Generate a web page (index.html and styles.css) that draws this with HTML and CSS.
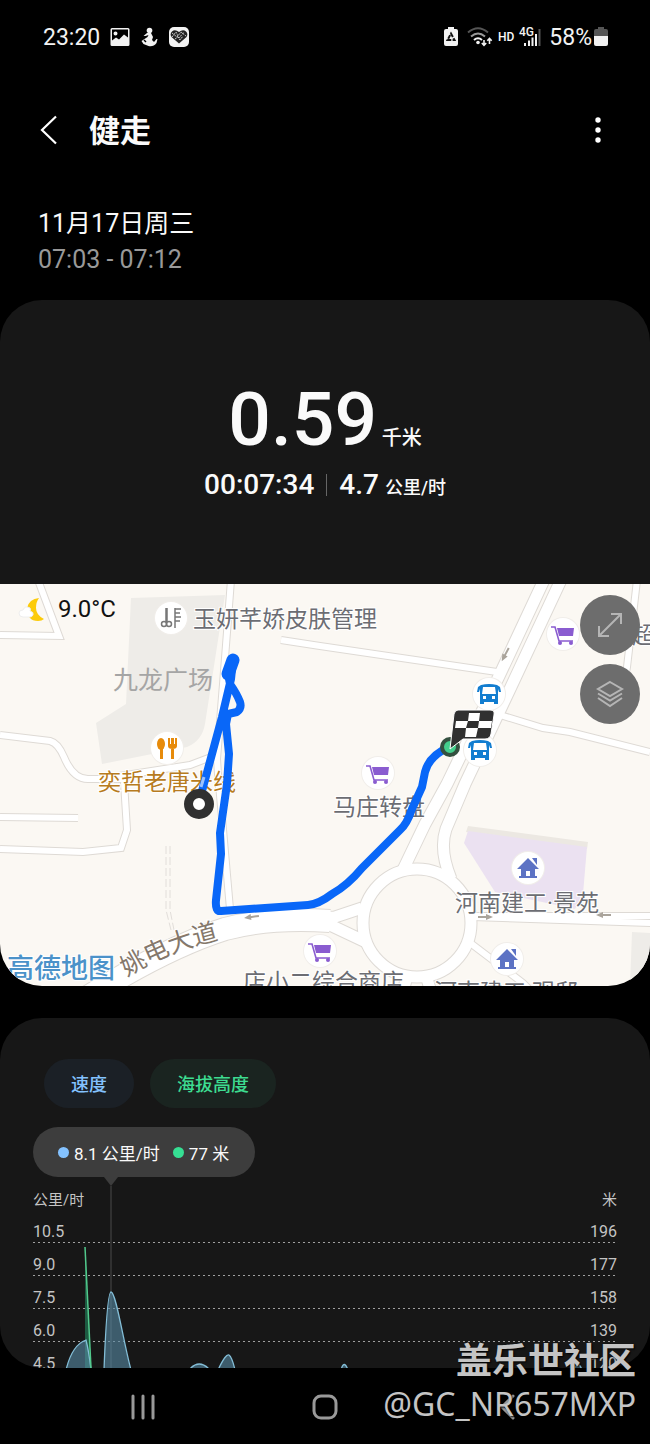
FILE: index.html
```html
<!DOCTYPE html>
<html lang="zh-CN">
<head>
<meta charset="utf-8">
<meta name="viewport" content="width=device-width, initial-scale=1">
<title>健走</title>
<link rel="stylesheet" href="styles.css">
</head>
<body>
<div class="screen">
  <div class="status">
    <div class="status-side">
      <span class="clock">23:20</span>
      <svg width="20" height="20" viewBox="0 0 20 20"><path fill="#f2f2f2" fill-rule="evenodd" d="M2 1h16q1.500 0 1.500 1.500v15q0 1.500-1.500 1.500h-16q-1.500 0-1.500-1.500v-15q0-1.500 1.500-1.500zM2 2.500v11l4-3 3 2 5-5 4 3v-8zM5.500 4.500a2 2 0 1 1 0 4 2 2 0 0 1 0-4z"/></svg>
      <svg width="18" height="20" viewBox="0 0 18 20"><g fill="#f2f2f2"><circle cx="9.500" cy="3.500" r="2.800"/><path d="M7 6l4 0 2 4-1 3 2 2 2.500-3 1 0-1 4q-3 4-8 3l-5-2-2-3 3-2 3-2 1-2-3 1-2 0z"/></g><path d="M4 13l2 2" stroke="#000" stroke-width="1.500"/></svg>
      <svg width="22" height="22" viewBox="0 0 22 22"><rect x="1" y="1" width="20" height="20" rx="5" fill="#f2f2f2"/><path fill="#222" d="M11 17.500L3.500 11Q1.500 8 4 5.500Q7 3 11 6Q15 3 18 5.500Q20.500 8 18.500 11z"/><path fill="none" stroke="#ddd" stroke-width=".9" stroke-dasharray="2 1" d="M4 7l5 4 4-5 5 4M4 11l4-5 3 6 5-6M7 13l3-2 2 3 3-4"/></svg>
    </div>
    <div class="status-side status-right">
      <svg width="14" height="20" viewBox="0 0 14 20"><path fill="#f2f2f2" d="M4 0h6v2h2q2 0 2 2v13q0 2-2 2H2q-2 0-2-2V4q0-2 2-2h2z"/><path fill="none" stroke="#111" stroke-width="2" stroke-dasharray="4 1.300" d="M7 6.500l3.500 6.500h-7z"/></svg>
      <svg class="wifi" width="26" height="20" viewBox="0 0 26 20" fill="none" stroke-width="2"><path stroke="#555" d="M1 5.500Q11-3 21 5.500"/><path stroke="#999" d="M4 9.500q7-6 14 0"/><path stroke="#f2f2f2" d="M7 13q4-3.500 8 0"/><circle cx="11" cy="15.500" r="1.800" fill="#f2f2f2"/><path stroke="#f2f2f2" stroke-width="1.600" d="M17 13v5M14.800 16l2.200 2.300 2.200-2.300M22.500 17v-5.500M20.300 13.700l2.200-2.300 2.200 2.300"/></svg>
      <span class="hd">HD</span>
      <svg class="signal" width="22" height="20" viewBox="0 0 22 20"><text x="0" y="9" class="net">4G</text><g fill="#f2f2f2"><path d="M5 16h2v3H5zM9 13.500h2V19H9zM12.500 10.500h2V19h-2zM16 7h2v12h-2z"/><path fill="#555" d="M19.500 2h2v17h-2z"/></g></svg>
      <span class="clock percent">58%</span>
      <svg width="14" height="20" viewBox="0 0 14 20"><path fill="#555" d="M4 0h6v2h2q2 0 2 2v5H0V4q0-2 2-2h2z"/><path fill="#f2f2f2" d="M0 9h14v8q0 2-2 2H2q-2 0-2-2z"/></svg>
    </div>
  </div>

  <header class="bar">
    <button class="icon-btn back" aria-label="返回"><svg width="18" height="30" viewBox="0 0 18 30"><path d="M16 1.500L2 15l14 13.500" fill="none" stroke="#fff" stroke-width="2.200"/></svg></button>
    <h1>健走</h1>
    <button class="icon-btn" aria-label="更多"><svg width="8" height="26" viewBox="0 0 8 26" fill="#fff"><circle cx="4" cy="3" r="2.700"/><circle cx="4" cy="13" r="2.700"/><circle cx="4" cy="23" r="2.700"/></svg></button>
  </header>

  <div class="when">
    <p>11月17日周三</p>
    <p class="range">07:03 - 07:12</p>
  </div>

  <section class="workout">
    <div class="totals">
      <p class="distance">0.59 <span>千米</span></p>
      <p class="detail"><span>00:07:34</span><i></i><span>4.7 <small>公里/时</small></span></p>
    </div>
    <div class="map">
      <svg class="map-art" viewBox="0 0 650 402" role="img" aria-label="路线地图">
        <defs>
          <g id="minor">
            <path d="M38-4L59 52L0 51"/>
            <path d="M0 151L50 157Q58 159 64 173Q73 195 88 195L125 195M100 195L190 181L219 170"/>
            <path d="M124 198L127 246L121 264L83 268L0 265"/>
            <path d="M0 233L78 234"/>
            <path d="M231-4L223 100L217 175L219 205"/>
            <path d="M281 56L320 62L497 88"/>
            <path d="M500 131L543 144L570 148L650 168"/>
            <path d="M637-4L627 83L621 115"/>
            <path d="M465 355L523 399L530 406"/>
            <path d="M472 332L652 332M472 333L652 339"/>
            <path d="M219 200L230 325"/>
          </g>
          <g id="major">
            <path d="M544-4L500 90L447 200L425 240L402 288"/>
            <path d="M561-4L510 105L465 200L446 245Q439 266 451 295"/>
            <circle cx="417" cy="339" r="54"/>
            <path d="M408 388L403 408M425 388L431 408"/>
            <path d="M300 334L335 333L362 324M300 339L330 341L366 358"/>
          </g>
          <path id="avenue" d="M86 414Q165 364 225 345Q270 333 330 337"/>
          <g id="disc"><circle r="17" fill="#f1eeea"/><circle r="16" fill="#fff"/></g>
          <g id="cart"><use href="#disc"/><g fill="none" stroke="#8a5cd0" stroke-width="1.600"><path d="M-12-7h4l4 14H10"/></g><path d="M-6-6H11L10 2H-4z" fill="#8a5cd0"/><circle cx="-3" cy="9" r="2" fill="#8a5cd0"/><circle cx="8" cy="9" r="2" fill="#8a5cd0"/></g>
          <g id="bus"><use href="#disc"/><path fill="#127dd0" fill-rule="evenodd" d="M-8-9Q0-11 8-9L11-7L12-2h-2L9-5V10H5V8H-5v2h-4V-5l-1 3h-2l1-5zM-6-7L-7 0H7L6-7zM-6 2h3v3h-3zM3 2h3v3H3z"/></g>
          <g id="home"><use href="#disc"/><path fill="#5d73c4" fill-rule="evenodd" d="M-11 1L0-10L11 1H7V8H9V10H-9V8h2V1zM-2 3V8H2V3zM4-10H9V-3z"/></g>
          <g id="arrow" fill="none" stroke="#aaa49b" stroke-width="2"><path d="M-1 0H8"/><path d="M-7 0l7-3v6z" fill="#aaa49b" stroke="none"/></g>
          <path id="street" d="M127 393Q168 366 226 354"/>
        </defs>
        <rect width="650" height="402" fill="#fbf8f3"/>
        <path fill="#eeece8" d="M131 14L225 11L205 140Q202 157 187 163L102 180L96 139L126 120zM632 348L650 349V402H630z"/>
        <path fill="#ece8e2" d="M468 242L588 258L587 265L466 248z"/>
        <path fill="#ebe1f1" d="M468 247L587 263L583 310L575 325L495 308L464 259z"/>
        <g class="roads">
          <use href="#minor" class="edge minor"/><use href="#major" class="edge major"/><use href="#avenue" class="edge avenue"/>
          <use href="#minor" class="fill minor"/><use href="#major" class="fill major"/><use href="#avenue" class="fill avenue"/>
          <path d="M166 262V326L171 346M170 262V326L174 346" class="dash"/>
        </g>
        <use href="#arrow" transform="translate(251 333) rotate(-8)"/>
        <use href="#arrow" transform="translate(505 71) rotate(-62)"/>
        <use href="#arrow" transform="translate(486 333) rotate(180)"/>
        <use href="#arrow" transform="translate(603 331)"/>

        <g class="place">
          <text x="193" y="43">玉妍芊娇皮肤管理</text>
          <text x="333" y="231">马庄转盘</text>
          <text x="455" y="327">河南建工·景苑</text>
          <text x="243" y="406">店小二综合商店</text>
          <text x="434" y="416">河南建工·观邸</text>
          <text x="632" y="59">超</text>
          <text x="98" y="206" class="food">奕哲老唐米线</text>
          <text x="113" y="105" class="plaza">九龙广场</text>
          <text class="avenue-name"><textPath href="#street">姚电大道</textPath></text>
          <text x="7" y="394" class="brand">高德地图</text>
        </g>
        <g transform="translate(171 34)"><use href="#disc"/><g fill="none" stroke="#777" stroke-width="1.500"><path d="M-5-10V4M-4-10V4M4-10V10M4-9h6M4-5h5M4-1h6M4 3h5"/><circle cx="-7" cy="6" r="2.500"/><circle cx="-2" cy="6" r="2.500"/></g></g>
        <g transform="translate(167 164)"><use href="#disc"/><g fill="#e78b0b"><ellipse cx="-6" cy="-4" rx="4" ry="6"/><path d="M-7 0h3v11h-3zM4 0h3v11H4zM1-10h2v6h1v-6h3v6h1v-6h2v8q0 3-4.500 3T1-2z"/></g></g>
        <use href="#cart" x="378" y="189"/><use href="#cart" x="563" y="50"/><use href="#cart" x="320" y="367"/>
        <use href="#bus" x="489" y="110"/><use href="#bus" x="480" y="166"/>
        <use href="#home" x="528" y="284"/><use href="#home" x="507" y="375"/>
        <g fill="none" stroke="#0967f8" stroke-width="8" stroke-linecap="round" stroke-linejoin="round">
          <path d="M202 207L222 133L231 95L233 76L228 90L230 100Q237 110 240 118Q242 124 237 128L228 130L226 140L229 170L227 200L220 249L221 270L216 316Q215 328 221 327L308 321Q319 320 332 310Q348 301 362 284L400 246Q407 240 412 225L422 203L425 188Q429 172 449 163"/>
          <path d="M233 76L228 90" stroke-width="13"/>
        </g>
        <path d="M201 203l3-10" stroke="#fff" stroke-width="3" opacity=".6"/>
        <circle cx="199" cy="220" r="10.500" fill="#fff" stroke="#303030" stroke-width="9"/>
        <circle cx="450" cy="163" r="8" fill="#43cf8c" stroke="#34503f" stroke-width="4"/>
        <path d="M458 126H490Q495 126 494 131L491 150Q490 155 485 155H463L450 165L454 130Q455 126 458 126z" fill="#303030" stroke="#fff" stroke-width="1"/>
        <path fill="#fff" d="M469 129h11l-1 8h-11zM456 137h12l-2 7h-11zM479 137h13l-1 7h-13zM466 144h12l-2 9h-11z"/>
      </svg>
      <div class="weather">
        <svg width="30" height="25" viewBox="0 0 30 25"><path fill="#fccb09" d="M21 1Q11 2 9 11Q9 24 20 24Q24 24 26 22Q18 18 18 11Q18 5 21 1z"/><path fill="#fff" stroke="#eee" d="M5 20Q1 20 1 16Q1 13 5 13Q7 8 12 11Q13 13 12 14Q16 15 15 18Q14 20 12 20z"/></svg>
        <span>9.0°C</span>
      </div>
      <div class="map-tools">
        <button aria-label="展开"><svg width="26" height="26" viewBox="0 0 26 26"><path d="M2 24L24 2M14 2H24V12M2 14V24H12"/></svg></button>
        <button aria-label="图层"><svg width="28" height="28" viewBox="0 0 28 28"><path d="M14 2L26 9L14 16L2 9zM2 13.500L14 20.500L26 13.500M2 18L14 26L26 18"/></svg></button>
      </div>
    </div>
  </section>

  <section class="graph">
    <div class="chips"><button class="chip speed">速度</button><button class="chip height">海拔高度</button></div>
    <div class="readout"><b class="dot blue"></b>8.1 公里/时<b class="dot green"></b>77 米</div>
    <div class="chart">
      <div class="units"><span>公里/时</span><span>米</span></div>
      <div class="tick"><span>10.5</span><span>196</span></div>
      <div class="tick"><span>9.0</span><span>177</span></div>
      <div class="tick"><span>7.5</span><span>158</span></div>
      <div class="tick"><span>6.0</span><span>139</span></div>
      <div class="tick last"><span>4.5</span><span>120</span></div>
      <svg class="curves" viewBox="0 0 584 191" preserveAspectRatio="none">
        <path d="M78 9V191" stroke="#303030" stroke-width="2"/>
        <path d="M52 70L58 191H52z" fill="#1d5b42"/>
        <g fill="#578ba5" fill-opacity=".6" stroke="#83bdd6" stroke-width="1.300">
          <path d="M33 193Q39 168 53 163Q56 175 58 193z"/>
          <path d="M71 193Q74 115 78 115C83 115 90 163 98 193z"/>
          <path d="M156 193Q166 181 177 193zM185 193Q193 176 196 178T202 193zM308 193Q311 182 315 193zM541 193Q545 182 549 193z"/>
        </g>
        <path d="M52 70L58 191" fill="none" stroke="#52c98c" stroke-width="1.500"/>
      </svg>
    </div>
  </section>

  <nav class="nav">
    <button aria-label="最近"><svg width="24" height="26" viewBox="0 0 24 26"><path d="M2 2v22M12 2v22M22 2v22" stroke="#999" stroke-width="3" stroke-linecap="round"/></svg></button>
    <button aria-label="主页"><svg width="26" height="26" viewBox="0 0 26 26"><rect x="2" y="2" width="22" height="22" rx="7" fill="none" stroke="#999" stroke-width="3"/></svg></button>
    <button aria-label="后退"><svg width="24" height="26" viewBox="0 0 24 26"><path d="M18 2L7 13l11 11" fill="none" stroke="#999" stroke-width="3" stroke-linecap="round"/></svg></button>
  </nav>
  <div class="credit"><strong>盖乐世社区</strong><span>@GC_NR657MXP</span></div>
</div>
</body>
</html>
```
FILE: styles.css
```css
* { box-sizing: border-box; }
body { margin: 0; background: #000; color: #fafafa; font-family: Roboto, "Noto Sans CJK SC", sans-serif; }
p, h1 { margin: 0; }
button { border: 0; padding: 0; background: none; color: inherit; font: inherit; }
svg { display: block; flex: none; }
.screen { position: relative; }

.status { display: flex; justify-content: space-between; align-items: center; height: 74px; padding: 0 42px 0 43px; }
.status-side { display: flex; align-items: center; gap: 10px; }
.status-right { gap: 5px; }
.wifi { margin-left: 4px; }
.clock { padding-top: 2px; font-size: 23px; line-height: 28px; color: #f2f2f2; }
.percent { margin: 0 -3px 0 3px; }
.hd { font-size: 12px; font-weight: 500; }
.signal { overflow: visible; }
.net { font: 500 12px Roboto, sans-serif; fill: #f2f2f2; }

.bar { display: flex; align-items: center; height: 112px; padding: 0 48px 0 40px; }
.bar h1 { flex: 1; margin-left: 31px; padding-top: 3px; font-size: 31px; line-height: 40px; font-weight: 700; }

.when { padding: 20px 38px 0; font-size: 25px; line-height: 36px; height: 114px; }
.range { color: #999; }

.workout { overflow: hidden; border-radius: 42px; background: #171717; }
.totals { height: 284px; padding-top: 74px; text-align: center; font-weight: 500; }
.distance { font-size: 75px; line-height: 90px; }
.distance span { font-size: 20px; line-height: 20px; margin-left: -14px; }
.detail { display: flex; justify-content: center; align-items: baseline; gap: 12px; margin-top: 2px; font-size: 28px; line-height: 38px; }
.detail i { align-self: center; width: 1px; height: 22px; background: #666; }
.detail small { font-size: 18px; line-height: 18px; margin-left: -1px; }

.map { position: relative; }
.map-art { width: 100%; height: auto; }
.roads { fill: none; }
.edge { stroke: #dedad5; }
.fill { stroke: #fff; }
.edge.minor { stroke-width: 8px; }
.fill.minor { stroke-width: 6px; }
.edge.major { stroke-width: 13px; }
.fill.major { stroke-width: 11px; }
.edge.avenue { stroke-width: 24px; }
.fill.avenue { stroke-width: 22px; }
.dash { stroke: #e2deda; stroke-width: 1px; stroke-dasharray: 8 3; }
.place { font: 400 23px Roboto, "Noto Sans CJK SC", sans-serif; fill: #6c6d73; stroke: #fff; stroke-width: 2px; paint-order: stroke; }
.food { fill: #b77b20; }
.plaza { font-size: 25px; fill: #a5a5a5; stroke: none; }
.avenue-name { font-size: 25px; fill: #85786b; }
.brand { font-size: 27px; font-weight: 500; fill: #4b92c9; }
.weather { position: absolute; top: 10px; left: 18px; display: flex; align-items: center; gap: 10px; font-size: 24px; line-height: 30px; color: #111; }
.map-tools { position: absolute; top: 11px; right: 10px; display: grid; gap: 9px; }
.map-tools button { display: grid; place-items: center; width: 60px; height: 60px; border-radius: 50%; background: #6d6d6d; }
.map-tools path { fill: none; stroke: #b5b5b5; stroke-width: 2px; }

.graph { height: 350px; margin-top: 32px; padding: 41px 33px 0; overflow: hidden; border-radius: 42px; background: #171717; }
.chips { display: flex; gap: 16px; padding-left: 11px; }
.chip { height: 49px; padding: 0 27px 2px; border-radius: 25px; font-size: 18px; font-weight: 500; }
.speed { color: #84c2ff; background: #1b2026; }
.height { color: #3ddc91; background: #1a2420; }
.readout { position: relative; display: flex; align-items: center; width: max-content; height: 50px; margin-top: 19px; padding: 0 26px 0 25px; border-radius: 25px; background: #3d3d3d; font-size: 17px; }
.readout::after { content: ""; position: absolute; top: 100%; left: 71px; border: 7px solid transparent; border-top: 9px solid #3d3d3d; border-bottom: 0; }
.dot { width: 11px; height: 11px; margin-right: 5px; border-radius: 50%; }
.blue { background: #84c2ff; }
.green { margin-left: 13px; background: #36df93; }
.chart { position: relative; color: #c4c4c4; font-size: 16px; }
.units { display: flex; justify-content: space-between; height: 33px; padding-top: 12px; font-size: 15px; line-height: 22px; }
.tick { display: flex; justify-content: space-between; align-items: flex-end; height: 33px; padding-bottom: 1px; line-height: 20px; background: repeating-linear-gradient(90deg, #a0a0a0 0 2px, transparent 2px 5px) bottom / 100% 1px no-repeat; }
.last { background: none; }
.curves { position: absolute; top: 0; left: 0; width: 100%; height: 191px; }

.nav { display: flex; justify-content: center; align-items: center; gap: 157px; height: 76px; padding-top: 2px; }
.credit { position: absolute; right: 14px; bottom: 18px; display: grid; justify-items: end; color: #c4c4c4; text-shadow: 1px 1px 2px #000; }
.credit strong { font: 700 36px/48px "Noto Sans CJK SC", sans-serif; }
.credit span { font: 32px/44px "Noto Sans", sans-serif; }
```
